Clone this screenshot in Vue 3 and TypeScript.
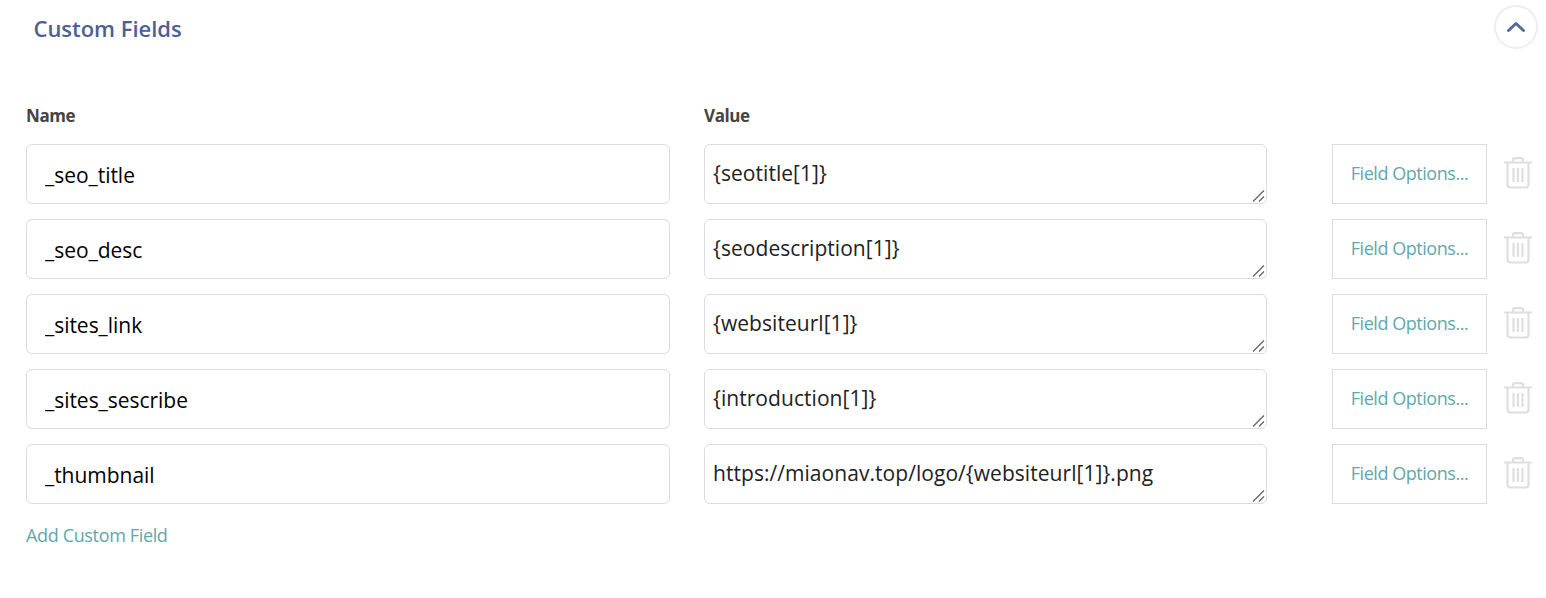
<script setup lang="ts">
interface Field { name: string; value: string }
const fields: Field[] = [
  { name: '_seo_title', value: '{seotitle[1]}' },
  { name: '_seo_desc', value: '{seodescription[1]}' },
  { name: '_sites_link', value: '{websiteurl[1]}' },
  { name: '_sites_sescribe', value: '{introduction[1]}' },
  { name: '_thumbnail', value: 'https://miaonav.top/logo/{websiteurl[1]}.png' },
]
</script>

<template>
  <div class="page">
    <header class="head">
      <h2 class="title">Custom Fields</h2>
      <button class="toggle" type="button" aria-label="Collapse">
        <svg width="20" height="20" viewBox="0 0 20 20" fill="none">
          <path d="M2.5 13.5 L10 6.5 L17.5 13.5" stroke="#5568a0" stroke-width="3" stroke-linecap="round" stroke-linejoin="round" />
        </svg>
      </button>
    </header>
    <div class="labels">
      <div class="label name-col">Name</div>
      <div class="label">Value</div>
    </div>
    <div class="rows">
      <div v-for="f in fields" :key="f.name" class="row">
        <input class="name-input" type="text" :value="f.name" />
        <textarea class="value-input" :value="f.value"></textarea>
        <button class="options" type="button">Field Options...</button>
        <button class="trash" type="button" aria-label="Delete">
          <svg width="28" height="32" viewBox="0 0 28 32" fill="none" stroke="#dfdfdf" stroke-width="2.2">
            <path d="M0.5 5.5 H27.5" stroke-linecap="round" />
            <path d="M9 5 V2.8 Q9 1.2 11 1.2 H17 Q19 1.2 19 2.8 V5" />
            <path d="M3.5 6 V27.5 Q3.5 30.5 6.5 30.5 H21.5 Q24.5 30.5 24.5 27.5 V6" />
            <path d="M9.5 11 V25 M14 11 V25 M18.5 11 V25" />
          </svg>
        </button>
      </div>
    </div>
    <a class="add" href="#" @click.prevent>Add Custom Field</a>
  </div>
</template>

<style scoped>
.page {
  width: 1546px;
  height: 598px;
  box-sizing: border-box;
  padding: 5px 8px 0 26px;
  font-family: "Open Sans", "Noto Sans", sans-serif;
  background: #fff;
  overflow: hidden;
}
.head {
  display: flex;
  align-items: center;
  justify-content: space-between;
  height: 44px;
}
.title {
  margin: 0 0 0 7.5px;
  padding-top: 2px;
  font-size: 22px;
  font-weight: 600;
  letter-spacing: -0.03px;
  color: #4d6095;
}
.toggle {
  width: 44px;
  height: 44px;
  padding: 0;
  display: flex;
  align-items: center;
  justify-content: center;
  border: 2px solid #eeeef0;
  border-radius: 50%;
  background: #fff;
}
.labels {
  display: flex;
  margin-top: 54px;
  height: 24px;
  align-items: center;
}
.label {
  font-size: 17px;
  font-weight: 700;
  letter-spacing: -0.4px;
  color: #444;
}
.name-col { width: 678px; }
.rows {
  display: flex;
  flex-direction: column;
  gap: 15px;
  margin-top: 17px;
}
.row {
  display: flex;
  align-items: flex-start;
  height: 60px;
}
.name-input,
.value-input {
  box-sizing: border-box;
  height: 60px;
  border: 1px solid #dcdcdc;
  border-radius: 6px;
  background: #fff;
  font-family: inherit;
  outline: none;
  margin: 0;
}
.name-input {
  width: 644px;
  padding: 2px 18px 0;
  font-size: 21px;
  letter-spacing: -0.03px;
  color: #000;
}
.value-input {
  width: 563px;
  margin-left: 34px;
  padding: 12px 8px 0;
  font-size: 21px;
  line-height: 32px;
  letter-spacing: 0.05px;
  color: #222;
  resize: vertical;
  display: block;
}
.value-input::-webkit-resizer {
  background: url("data:image/svg+xml,%3Csvg xmlns='http://www.w3.org/2000/svg' width='15' height='15'%3E%3Cpath d='M2 13.5 L13 2.5 M8 13.5 L13 8.5' stroke='%23666' stroke-width='1.3' fill='none'/%3E%3C/svg%3E") no-repeat center;
}
.options {
  box-sizing: border-box;
  width: 155px;
  height: 60px;
  margin-left: 65px;
  padding: 0 0 2px;
  border: 1px solid #dcdcdc;
  background: #fff;
  font-family: inherit;
  font-size: 18px;
  letter-spacing: -0.45px;
  color: #5fa8ab;
  white-space: nowrap;
}
.trash {
  width: 28px;
  height: 32px;
  margin: 13px 0 0 17px;
  padding: 0;
  border: 0;
  background: none;
  display: block;
}
.add {
  display: inline-block;
  margin-top: 19px;
  font-size: 18px;
  letter-spacing: -0.35px;
  color: #5fa8ab;
  text-decoration: none;
}
</style>
